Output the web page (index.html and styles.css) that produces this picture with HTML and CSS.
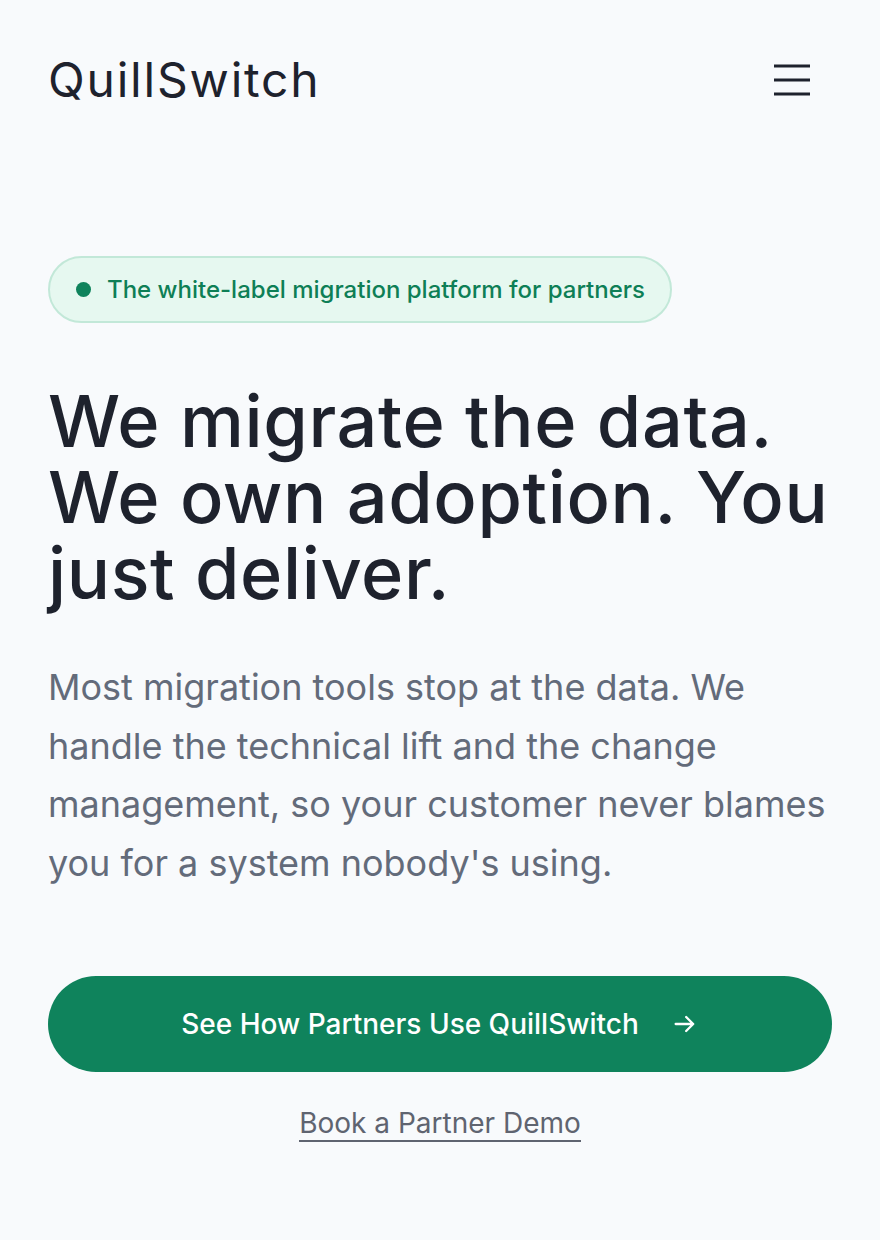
FILE: index.html
```html
<!DOCTYPE html>
<html lang="en">
<head>
<meta charset="utf-8">
<title>QuillSwitch</title>
<link rel="stylesheet" href="styles.css">
</head>
<body>
<header class="header">
  <div class="logo">QuillSwitch</div>
  <button class="menu" aria-label="Menu">
    <svg width="40" height="40" viewBox="0 0 40 40"><path d="M2 6H38M2 20H38M2 34H38" stroke="#1e222d" stroke-width="3.2" stroke-linecap="butt" fill="none"/></svg>
  </button>
</header>
<main class="hero">
  <div class="badge"><span class="dot"></span><span>The white-label migration platform for partners</span></div>
  <h1 class="title">We migrate the data. We own adoption. You just deliver.</h1>
  <p class="lead">Most migration tools stop at the data. We handle the technical lift and the change management, so your customer never blames you for a system nobody's using.</p>
  <div class="actions">
    <a class="cta" href="#">See How Partners Use QuillSwitch
      <svg width="28" height="28" viewBox="0 0 24 24"><path d="M4 12H19M13 6l6 6-6 6" stroke="#fff" stroke-width="2" fill="none" stroke-linecap="round" stroke-linejoin="round"/></svg>
    </a>
    <a class="link" href="#">Book a Partner Demo</a>
  </div>
</main>
</body>
</html>
```

FILE: styles.css
```css
* { box-sizing: border-box; }
html, body { margin: 0; padding: 0; }
body {
  background: #f8fafc;
  font-family: Inter, "Liberation Sans", sans-serif;
  color: #1e222d;
  width: 880px;
}
.header {
  display: flex;
  justify-content: space-between;
  align-items: center;
  padding: 48px 48px 0 48px;
  height: 112px;
}
.logo {
  font-family: Inter, sans-serif;
  font-size: 48px;
  font-weight: 400;
  letter-spacing: 1.8px;
  color: #1e222d;
  line-height: 1;
}
.menu {
  background: none;
  border: 0;
  padding: 0;
  width: 40px;
  height: 40px;
  margin-right: 20px;
  display: flex;
}
.hero {
  padding: 144px 48px 0 48px;
}
.badge {
  display: inline-flex;
  align-items: center;
  gap: 16px;
  height: 67px;
  padding: 0 25px 0 26px;
  border: 2px solid #c2e8d8;
  background: #e6f8f0;
  border-radius: 999px;
  color: #0e7f56;
  font-size: 24px;
  font-weight: 500;
}
.dot {
  width: 15px;
  height: 15px;
  border-radius: 50%;
  background: #0f835c;
}
.title {
  margin: 60px 0 0 0;
  font-size: 72px;
  line-height: 76px;
  font-weight: 500;
  letter-spacing: 0.6px;
  color: #1e222d;
}
.lead {
  margin: 47px 0 0 0;
  font-size: 36px;
  line-height: 58.5px;
  color: #636b7a;
}
.actions {
  margin-top: 84px;
  display: flex;
  flex-direction: column;
  align-items: center;
  gap: 34px;
}
.cta {
  width: 100%;
  height: 96px;
  border-radius: 999px;
  background: #0f835c;
  color: #fff;
  text-decoration: none;
  display: flex;
  align-items: center;
  justify-content: center;
  gap: 32px;
  font-size: 28px;
  font-weight: 500;
}
.link {
  display: block;
  color: #5f6470;
  font-size: 28px;
  line-height: 34px;
  text-decoration: none;
  border-bottom: 2px solid #5f6470;
}
```
